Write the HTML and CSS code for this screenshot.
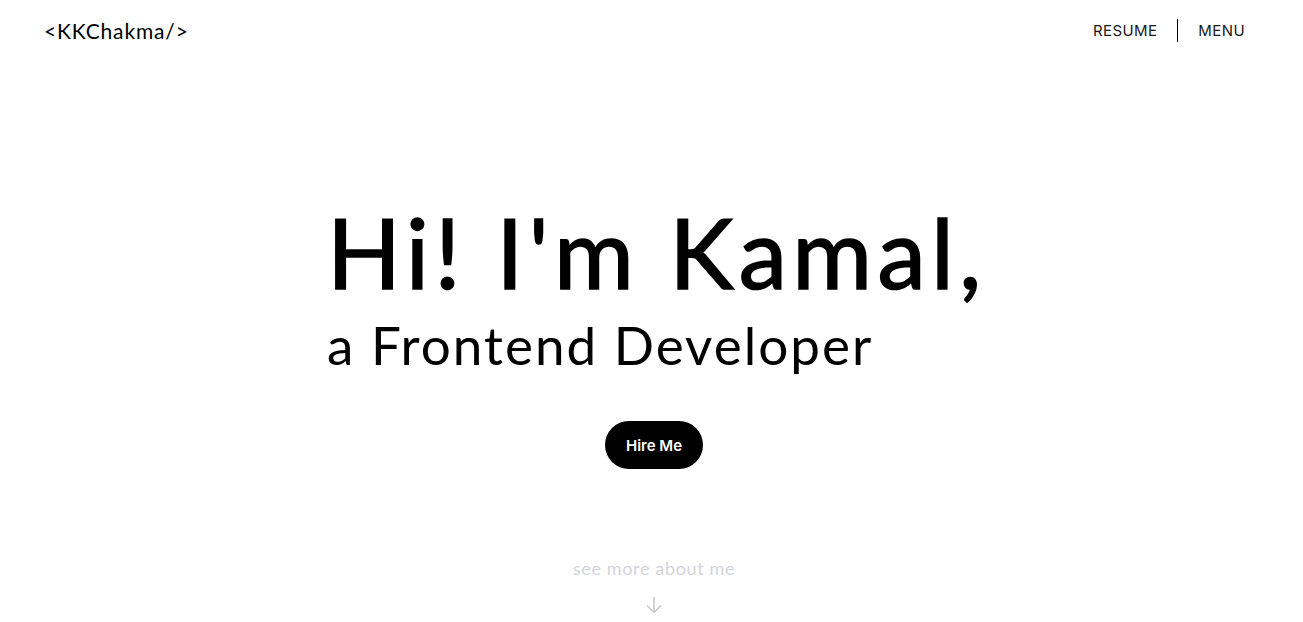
FILE: index.html
```html
<!DOCTYPE html>
<html lang="en">
<head>
<meta charset="utf-8">
<title>KKChakma</title>
<link rel="stylesheet" href="styles.css">
</head>
<body>
<header class="topbar">
  <a class="logo" href="#">&lt;KKChakma/&gt;</a>
  <nav class="nav">
    <a class="nav-link" href="#">RESUME</a>
    <span class="nav-divider"></span>
    <a class="nav-link" href="#">MENU</a>
  </nav>
</header>
<main class="hero">
  <div class="intro">
    <h1 class="title">Hi! I'm Kamal,</h1>
    <p class="subtitle">a Frontend Developer</p>
  </div>
  <a class="hire" href="#">Hire Me</a>
  <div class="more">
    <span class="more-text">see more about me</span>
    <svg class="more-arrow" width="18" height="18" viewBox="0 0 18 18" fill="none" stroke="currentColor" stroke-width="1.6" stroke-linecap="round" stroke-linejoin="round"><path d="M9 1.5v15M2.5 10l6.5 6.5 6.5-6.5"/></svg>
  </div>
</main>
</body>
</html>
```
FILE: styles.css
```css
* { box-sizing: border-box; }
html, body { margin: 0; padding: 0; background: #fff; }
body {
  font-family: "Lato", "Noto Sans", sans-serif;
  color: #000;
  width: 1303px;
  height: 622px;
  overflow: hidden;
}
a { text-decoration: none; color: inherit; }
.topbar {
  display: flex;
  justify-content: space-between;
  align-items: center;
  height: 61px;
  padding: 0 58px 0 44px;
}
.logo {
  font-size: 21px;
  letter-spacing: 0.85px;
  color: #000;
}
.nav {
  display: flex;
  align-items: center;
  gap: 20px;
  font-family: "Inter", "Noto Sans", sans-serif;
}
.nav-link {
  font-size: 15px;
  letter-spacing: 0.4px;
  color: #1a1a1a;
}
.nav-divider {
  width: 1px;
  height: 23px;
  background: #000;
}
.hero {
  display: flex;
  flex-direction: column;
  align-items: center;
  padding-top: 142px;
  padding-left: 5px;
}
.intro {
  width: 654px;
  white-space: nowrap;
}
.title {
  margin: 0;
  font-size: 97px;
  font-weight: 400;
  line-height: 1;
  letter-spacing: 5.4px;
  -webkit-text-stroke: 1.6px #000;
}
.subtitle {
  margin: 16px 0 0 0;
  font-size: 53px;
  line-height: 1.1;
  letter-spacing: 2px;
}
.hire {
  margin-top: 47px;
  width: 98px;
  height: 48px;
  border-radius: 24px;
  background: #000;
  color: #fff;
  display: flex;
  align-items: center;
  justify-content: center;
  font-family: "Inter", "Noto Sans", sans-serif;
  font-size: 15px;
  font-weight: 600;
}
.more {
  margin-top: 88px;
  display: flex;
  flex-direction: column;
  align-items: center;
  gap: 17px;
  color: #d4d4dc;
}
.more-text {
  font-size: 18px;
  letter-spacing: 0.65px;
}
.more-arrow { color: #c8c8d0; }
```
